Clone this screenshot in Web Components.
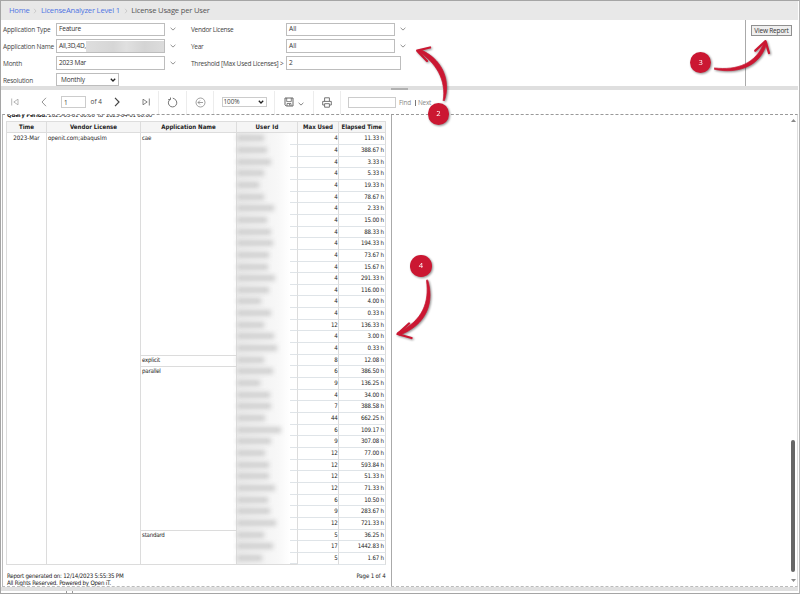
<!DOCTYPE html>
<html lang="en">
<head>
<meta charset="utf-8">
<title>License Usage per User</title>
<style>
  body {
    margin: 0;
    width: 800px;
    height: 594px;
    overflow: hidden;
    background: #fff;
  }
</style>
</head>
<body>
<report-page></report-page>
<script>
(() => {
  // [application, max used, elapsed time, width of the masked user id]
  const rows = [
    ['cae', 4, '11.33', 27], ['', 4, '388.67', 30], ['', 4, '3.33', 34],
    ['', 4, '5.33', 27], ['', 4, '19.33', 22], ['', 4, '78.67', 27],
    ['', 4, '2.33', 37], ['', 4, '15.00', 30], ['', 4, '88.33', 34],
    ['', 4, '194.33', 36], ['', 4, '73.67', 32], ['', 4, '15.67', 31],
    ['', 4, '291.33', 38], ['', 4, '116.00', 32], ['', 4, '4.00', 24],
    ['', 4, '0.33', 34], ['', 12, '136.33', 27], ['', 4, '3.00', 37],
    ['', 4, '0.33', 40], ['explicit', 8, '12.08', 27], ['parallel', 6, '386.50', 36],
    ['', 9, '136.25', 23], ['', 4, '34.00', 33], ['', 7, '388.58', 34],
    ['', 44, '662.25', 28], ['', 6, '109.17', 44], ['', 9, '307.08', 34],
    ['', 12, '77.00', 28], ['', 12, '593.84', 32], ['', 12, '51.33', 32],
    ['', 12, '71.33', 38], ['', 6, '10.50', 31], ['', 9, '283.67', 33],
    ['', 12, '721.33', 39], ['standard', 5, '36.25', 27], ['', 17, '1442.83', 36],
    ['', 5, '1.67', 25]
  ]

  // one line of text, tracked so that it takes exactly its "w" in pixels
  class FitText extends HTMLElement {
    constructor() {
      super()
      this.attachShadow({ mode: 'open' }).innerHTML = `
      <style>
        :host { display: inline-block; white-space: nowrap; line-height: 1.2; }
      </style>
      <slot></slot>
      `
    }

    connectedCallback() {
      const w = Number(this.getAttribute('w'))
      const natural = this.getBoundingClientRect().width
      if (w && natural) {
        this.style.letterSpacing = `${(w - natural) / this.textContent.length}px`
      }
    }
  }

  class ReportBreadcrumb extends HTMLElement {
    constructor() {
      super()
      this.attachShadow({ mode: 'open' }).innerHTML = `
      <style>
        :host {
          display: flex;
          align-items: center;
          height: 19px;
          padding-left: 8px;
          background: #e8e8e8;
          font: 7.6px "Open Sans", sans-serif;
          color: #555;
        }
        a { color: #4f74e3; }
        svg { width: 4px; height: 6px; margin: 1px 3.7px 0; }
      </style>
      <a><fit-text w="20.5">Home</fit-text></a>
      <svg viewBox="0 0 4 6"><path d="M1 .8 3 3 1 5.2" fill="none" stroke="#bbb" stroke-width=".6"/></svg>
      <a><fit-text w="79">LicenseAnalyzer Level 1</fit-text></a>
      <svg viewBox="0 0 4 6"><path d="M1 .8 3 3 1 5.2" fill="none" stroke="#bbb" stroke-width=".6"/></svg>
      <fit-text w="78.5">License Usage per User</fit-text>
      `
    }
  }

  class ParamField extends HTMLElement {
    constructor() {
      super()
      const kind = this.getAttribute('kind') || 'list'
      const masked = this.hasAttribute('masked')
      this.attachShadow({ mode: 'open' }).innerHTML = `
      <style>
        :host { display: flex; align-items: center; height: 14px; color: #333; }
        .label { width: var(--label-width, 53px); flex: none; padding-top: 1px; color: #444; }
        .box {
          box-sizing: border-box;
          display: flex;
          align-items: center;
          width: 108.5px;
          height: 13.6px;
          padding-left: 2px;
          border: 1px solid #bdbdbd;
          background: #fff;
        }
        .text { width: 115px; }
        .select { width: 63px; height: 13px; padding-left: 4px; padding-right: 2px; justify-content: space-between; }
        .mask {
          flex: 1;
          height: 11px;
          background: linear-gradient(90deg, #dedede, #d6d6d6 35%, #e0e0e0 52%, #d4d4d4 75%, #dcdcdc);
        }
        .chev { width: 6px; height: 4px; margin-left: 5px; }
        .arrow { width: 6px; height: 4px; }
      </style>
      <div class="label"><fit-text w="${this.getAttribute('lw')}">${this.getAttribute('label')}</fit-text></div>
      <div class="box ${kind}"><slot></slot>${masked ? '<div class="mask"></div>' : ''}${kind === 'select'
        ? '<svg class="arrow" viewBox="0 0 6 4"><path d="M.8.8 3 3 5.2.8" fill="none" stroke="#222" stroke-width="1.3"/></svg>' : ''}</div>
      ${kind === 'list' ? '<svg class="chev" viewBox="0 0 6 4"><path d="M.6.8 3 3.1 5.4.8" fill="none" stroke="#777" stroke-width=".8"/></svg>' : ''}
      `
    }
  }

  class ParamPanel extends HTMLElement {
    constructor() {
      super()
      this.attachShadow({ mode: 'open' }).innerHTML = `
      <style>
        :host {
          display: flex;
          height: 66px;
          font: 6.5px "Open Sans", sans-serif;
        }
        .fields {
          display: grid;
          grid-template-columns: 188px auto;
          grid-template-rows: repeat(4, 14px);
          row-gap: 2.8px;
          align-content: start;
          flex: 1;
          padding: 2.3px 0 0 2px;
        }
        .right { --label-width: 95px; }
        .action {
          box-sizing: border-box;
          width: 53px;
          padding: 5.4px 0 0 5px;
          border-left: 1px solid #aaa;
        }
        .button {
          box-sizing: border-box;
          display: flex;
          align-items: center;
          justify-content: center;
          width: 41px;
          height: 10.6px;
          border: 1px solid #909090;
          background: #efefef;
          color: #333;
        }
      </style>
      <div class="fields">
        <param-field label="Application Type" lw="47.5"><fit-text w="22">Feature</fit-text></param-field>
        <param-field class="right" label="Vendor License" lw="42.5"><fit-text w="7.5">All</fit-text></param-field>
        <param-field label="Application Name" lw="51" masked><fit-text w="27">All,3D,4D,</fit-text></param-field>
        <param-field class="right" label="Year" lw="12.5"><fit-text w="7.5">All</fit-text></param-field>
        <param-field label="Month" lw="19"><fit-text w="27">2023 Mar</fit-text></param-field>
        <param-field class="right" kind="text" label="Threshold [Max Used Licenses] &gt;" lw="92.5"><fit-text w="4">2</fit-text></param-field>
        <param-field kind="select" label="Resolution" lw="30"><fit-text w="24">Monthly</fit-text></param-field>
      </div>
      <div class="action"><div class="button"><fit-text w="34.5">View Report</fit-text></div></div>
      `
    }
  }

  class ReportToolbar extends HTMLElement {
    constructor() {
      super()
      this.attachShadow({ mode: 'open' }).innerHTML = `
      <style>
        :host {
          display: flex;
          align-items: center;
          height: 24px;
          font: 6.4px "Open Sans", sans-serif;
          color: #444;
        }
        .group {
          box-sizing: border-box;
          display: flex;
          align-items: center;
          height: 23px;
          border-right: 1px solid #ececec;
        }
        .nav { width: 158px; padding-left: 10px; }
        .mid { justify-content: center; }
        svg { fill: none; stroke: #666; flex: none; }
        .page, .find { box-sizing: border-box; height: 11.5px; border: 1px solid #ccc; }
        .page { width: 25px; padding: 1px 0 0 2px; margin: 0 4.5px 0 14.5px; }
        .find { width: 48px; margin-right: 3px; }
        .zoom {
          box-sizing: border-box;
          display: flex;
          align-items: center;
          justify-content: space-between;
          width: 45px;
          height: 10px;
          padding: 0 2px 0 1px;
          border: 1px solid #ccc;
        }
        .search { padding: 1px 0 0 14px; color: #888; }
        i { width: 1px; height: 6px; margin: 0 2px 0 4px; background: #777; }
      </style>
      <div class="group nav">
        <svg width="8" height="8" viewBox="0 0 8 8" stroke-width=".7" style="stroke:#999"><path d="M.7.5v7M7 1.2 2.8 4 7 6.8z"/></svg>
        <svg width="6" height="10" viewBox="0 0 6 10" stroke-width=".9" style="margin-left:21.5px;stroke:#888"><path d="M5 .8 1 5l4 4.2"/></svg>
        <div class="page"><fit-text w="3">1</fit-text></div>
        <fit-text w="11.5">of 4</fit-text>
        <svg width="6" height="10" viewBox="0 0 6 10" stroke-width="1.2" style="margin-left:12px;stroke:#444"><path d="M1 .8 5 5 1 9.2"/></svg>
        <svg width="8" height="8" viewBox="0 0 8 8" stroke-width=".8" style="margin-left:21.5px"><path d="M7.3.5v7M1 1.2 5.2 4 1 6.8z"/></svg>
      </div>
      <div class="group mid" style="width:28px">
        <svg width="11" height="11" viewBox="0 0 11 11" stroke-width=".9"><path d="M3.3 2.2A4.2 4.2 0 1 0 7.7 2.1M3.5.5v2.1H1.2M7.7 2.1 5.8 1.1"/></svg>
      </div>
      <div class="group mid" style="width:27px">
        <svg width="11" height="11" viewBox="0 0 11 11" stroke-width=".7" style="stroke:#777"><circle cx="5.5" cy="5.5" r="4.5"/><path d="M8 5.5H3M5 3.5 3 5.5l2 2"/></svg>
      </div>
      <div class="group mid" style="width:61px">
        <div class="zoom"><fit-text w="16">100%</fit-text><svg width="6" height="4" viewBox="0 0 6 4" stroke-width="1.3" style="stroke:#222"><path d="M.8.8 3 3 5.2.8"/></svg></div>
      </div>
      <div class="group mid" style="width:39px">
        <svg width="10" height="10" viewBox="0 0 10 10" stroke="#555"><path d="M1 1h8v8H2.2L1 7.8z" stroke-width="1"/><path d="M2.7 1v3.6h4.6V1M3 9V6.5h4V9M5.5 7v1.5" stroke-width=".8"/></svg>
        <svg width="6" height="4" viewBox="0 0 6 4" stroke-width=".8" style="margin:4px 0 0 4px"><path d="M.6.8 3 3.1 5.4.8"/></svg>
      </div>
      <div class="group mid" style="width:27px">
        <svg width="10" height="11" viewBox="0 0 10 11" stroke-width=".9"><path d="M2.6 4.3V.8h4.8v3.5M2.5 8H.7V4.4h8.6V8H7.5M2.6 6.7h4.8v3.5H2.6z"/></svg>
      </div>
      <div class="group search" style="border:0;padding-left:7px">
        <div class="find"></div>
        <fit-text w="12">Find</fit-text><i></i><fit-text w="13">Next</fit-text>
      </div>
      `
    }
  }

  class ReportTable extends HTMLElement {
    constructor() {
      super()
      const body = rows.map(([app, max, time, width], n) => `
        <div class="row ${n === rows.length - 1 ? 'last' : ''}">
          <div class="time">${n ? '' : '<fit-text w="24.5">2023-Mar</fit-text>'}</div>
          <div class="vendor">${n ? '' : '<fit-text w="54.5">openit.com;abaquslm</fit-text>'}</div>
          <div class="app ${app && n ? 'first' : ''}"><fit-text>${app}</fit-text></div>
          <div class="user"><b style="width:${width}px"></b></div>
          <div class="num">${max}</div>
          <div class="num">${time} h</div>
        </div>`).join('')
      this.attachShadow({ mode: 'open' }).innerHTML = `
      <style>
        :host {
          display: block;
          width: 379.5px;
          font: 6.1px "DejaVu Sans Condensed", "DejaVu Sans", sans-serif;
          font-stretch: condensed;
          letter-spacing: -.22px;
          color: #222;
        }
        .head, .row {
          display: grid;
          grid-template-columns: 40px 94px 96px 61px 41px 47.5px;
        }
        .head {
          box-sizing: border-box;
          height: 12.3px;
          background: #f5f5f5;
          border: solid #ddd;
          border-width: 1px 0;
          font-weight: bold;
          color: #222;
        }
        .head div {
          display: flex;
          align-items: center;
          justify-content: center;
          box-sizing: border-box;
          padding-bottom: 1px;
          border-left: 1px solid #ddd;
        }
        .head div:last-child { border-right: 1px solid #ddd; }
        .row { height: 11.67px; }
        .row > div {
          box-sizing: border-box;
          min-width: 0;
          border-left: 1px solid #dcdcdc;
          padding: 0 1px;
          line-height: 9.5px;
          white-space: nowrap;
        }
        .time { text-align: center; }
        .row > .app.first { border-top: 1px solid #dcdcdc; line-height: 8px; }
        .row > .num { text-align: right; padding-right: .4px; border-bottom: 1px solid #dfe4e8; }
        .row > .num:last-child { border-right: 1px solid #dcdcdc; padding-right: .8px; }
        .row > .user {
          padding: 0;
          background:
            linear-gradient(#dfe4e8, #dfe4e8) right bottom / 7px 1px no-repeat,
            linear-gradient(90deg, #ececec, #f8f8f8 70%, #fff 88%);
        }
        .user b {
          display: block;
          height: 6px;
          margin-top: 2px;
          background: #d0d0d0;
          filter: blur(2px);
        }
        .last > * { border-bottom: 1px solid #dcdcdc; }
      </style>
      <div class="head">
        <div><fit-text w="14">Time</fit-text></div>
        <div><fit-text w="44">Vendor License</fit-text></div>
        <div><fit-text w="51">Application Name</fit-text></div>
        <div><fit-text w="21.5">User Id</fit-text></div>
        <div><fit-text w="28">Max Used</fit-text></div>
        <div><fit-text w="38">Elapsed Time</fit-text></div>
      </div>
      ${body}
      `
    }
  }

  class ReportViewer extends HTMLElement {
    constructor() {
      super()
      this.attachShadow({ mode: 'open' }).innerHTML = `
      <style>
        :host {
          box-sizing: border-box;
          display: flex;
          height: 473px;
          margin-left: 1px;
          border: 1px dashed #999;
          border-left: 1px solid #bbb;
          border-right: 1px solid #ddd;
          border-bottom-color: #bbb;
          font: 6.1px "DejaVu Sans Condensed", "DejaVu Sans", sans-serif;
          font-stretch: condensed;
          color: #222;
        }
        .sheet {
          box-sizing: border-box;
          width: 389px;
          padding-left: 3px;
          border-right: 1px solid #aaa;
        }
        /* the period line is scrolled half out of view */
        .period {
          display: flex;
          align-items: flex-start;
          height: 6px;
          overflow: hidden;
          padding-left: 1px;
        }
        .period fit-text { margin-top: -4px; }
        .foot { display: flex; justify-content: space-between; padding: 7.7px 5.5px 0 1px; }
        .foot div { line-height: 7px; }
        .foot fit-text { line-height: 7.2px; vertical-align: top; }
        .bar {
          display: flex;
          flex-direction: column;
          align-items: center;
          width: 6px;
          margin-left: auto;
          margin-right: 1px;
          padding-top: 4px;
        }
        .thumb { width: 4.6px; height: 132px; margin: 318px 0 7px; border-radius: 2px; background: #666; }
        svg { width: 5px; height: 3px; fill: #888; }
      </style>
      <div class="sheet">
        <div class="period"><fit-text w="145"><strong>Query Period:</strong> 2023-03-01 00:00&nbsp; to&nbsp; 2023-04-01 00:00</fit-text></div>
        <report-table></report-table>
        <div class="foot">
          <div>
            <fit-text w="116.5">Report generated on: 12/14/2023 5:55:35 PM</fit-text><br>
            <fit-text w="104">All Rights Reserved. Powered by Open iT.</fit-text>
          </div>
          <fit-text w="29">Page 1 of 4</fit-text>
        </div>
      </div>
      <div class="bar">
        <svg viewBox="0 0 5 3"><path d="M0 3 2.5 0 5 3z"/></svg>
        <div class="thumb"></div>
        <svg viewBox="0 0 5 3"><path d="M0 0h5L2.5 3z"/></svg>
      </div>
      `
    }
  }

  // numbered marker that lies over the page; the arrow is passed in page coordinates
  class CallOut extends HTMLElement {
    constructor() {
      super()
      this.attachShadow({ mode: 'open' }).innerHTML = `
      <style>
        :host { position: absolute; inset: -1px; pointer-events: none; }
        svg, .dot { position: absolute; filter: drop-shadow(1.5px 1.8px 1px rgba(0, 0, 0, .45)); }
        svg { left: 0; top: 0; fill: #cb1732; stroke: #cb1732; stroke-linejoin: round; stroke-linecap: round; }
        .dot {
          left: ${this.getAttribute('x') - 10.8}px;
          top: ${this.getAttribute('y') - 10.8}px;
          width: 21.6px;
          height: 21.6px;
          border-radius: 50%;
          background: #cb1732;
          color: #fff;
          font: 7.6px/21.6px "Open Sans", sans-serif;
          text-align: center;
        }
      </style>
      <svg width="800" height="594" viewBox="0 0 800 594">
        <path d="${this.getAttribute('shaft')}" stroke-width=".7"/>
        <path d="${this.getAttribute('tip')}" fill="none" stroke-width="2.3"/>
      </svg>
      <div class="dot"><slot></slot></div>
      `
    }
  }

  class ReportPage extends HTMLElement {
    constructor() {
      super()
      this.attachShadow({ mode: 'open' }).innerHTML = `
      <style>
        :host {
          box-sizing: border-box;
          display: block;
          position: relative;
          width: 800px;
          height: 594px;
          border: 1px solid #a5a5a5;
          border-right-color: #b5b5b5;
          padding-right: 1px;
        }
        .split {
          display: flex;
          justify-content: center;
          align-items: center;
          height: 4px;
          background: #dfdfdf;
        }
        .split div { width: 17px; height: 2px; margin-top: 1px; background: #b0b0b0; }
        .hscroll { height: 4px; background: #e0e0e0; }
        .hscroll.tail { height: 1px; background: #fff; }
        .tail div { box-sizing: border-box; width: 7px; height: 2px; margin-left: 65px; border: solid #999; border-width: 0 1px; }
      </style>
      <report-breadcrumb></report-breadcrumb>
      <param-panel></param-panel>
      <div class="split"><div></div></div>
      <report-toolbar></report-toolbar>
      <report-viewer></report-viewer>
      <div class="hscroll"></div>
      <div class="hscroll tail"><div></div></div>
      <call-out x="438.3" y="114"
        shaft="M443.2 100.5C446.5 80 436 62 417.5 51L420 49.6C441 58 451.5 79 444.5 100.5z"
        tip="M430 47.5 417.2 50.6 427 61">2</call-out>
      <call-out x="700.7" y="62.5"
        shaft="M714.5 68C737 70.5 756 64 764.3 42L766.7 43C761 66 738 74.5 714.5 69.3z"
        tip="M755.3 50.7 765.5 41.2 769 53">3</call-out>
      <call-out x="421" y="265.8"
        shaft="M426.5 280.5C429.5 302 423 321 397.5 332.7L399 335.2C427 325 434.5 302 427.8 280.3z"
        tip="M409 323.5 397.5 334 411.5 338">4</call-out>
      `
    }
  }

  customElements.define('fit-text', FitText)
  customElements.define('report-breadcrumb', ReportBreadcrumb)
  customElements.define('param-field', ParamField)
  customElements.define('param-panel', ParamPanel)
  customElements.define('report-toolbar', ReportToolbar)
  customElements.define('report-table', ReportTable)
  customElements.define('report-viewer', ReportViewer)
  customElements.define('call-out', CallOut)
  customElements.define('report-page', ReportPage)
})()
</script>
</body>
</html>
